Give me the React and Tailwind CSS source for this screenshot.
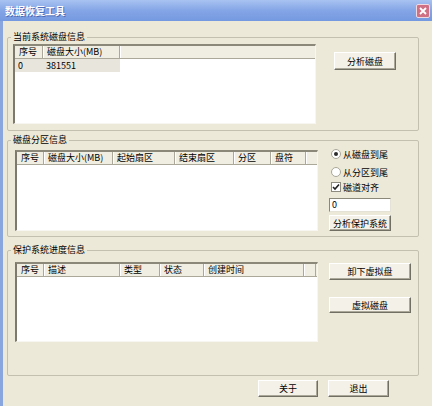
import React from "react";

const font = { fontFamily: '"Noto Sans CJK SC", "Liberation Sans", sans-serif' };

// XP-classic style push button
const Btn = ({ children, className }) => (
  <button
    className={`flex items-center justify-center bg-[#f3f1e8] border border-t-white border-l-white border-b-[#716f64] border-r-[#716f64] shadow-[inset_-1px_-1px_0_#aca899] text-[9px] leading-none text-black ${className}`}
  >
    {children}
  </button>
);

// etched group box with caption sitting on the top line
const Group = ({ label, className, children }) => (
  <div className={`ml-[4px] w-[412px] border border-[#c3c0b0] rounded-[2px] flex flex-col ${className}`}>
    <div className="-mt-[7px] ml-[3px] self-start px-[2px] h-[12px] bg-[#ece9d8] text-[9px] leading-[12px] text-black">
      {label}
    </div>
    {children}
  </div>
);

const ListView = ({ cols, rows = [], stub = true, className }) => (
  <div
    className={`bg-white border-t-2 border-l-2 border-t-[#8b887a] border-l-[#7d7a6d] border-b border-r border-b-[#f7f6f0] border-r-[#f7f6f0] flex flex-col overflow-hidden ${className}`}
  >
    <div className="flex h-[13px] shrink-0 bg-[#f0eee3] border-b border-b-[#aca899]">
      {cols.map((c) => (
        <div
          key={c.t}
          style={{ width: c.w }}
          className="shrink-0 h-full pl-[4px] border-r border-r-[#aca899] shadow-[1px_0_0_white] text-[9px] leading-[12px] text-black whitespace-nowrap overflow-hidden"
        >
          {c.t}
        </div>
      ))}
      {stub && <div className="w-[12px] shrink-0 h-full border-r border-r-[#aca899]" />}
      <div className="flex-1" />
    </div>
    {rows.map((r, i) => (
      <div key={i} className="flex h-[13px] self-start bg-[#e8e6dc]">
        {r.map((v, j) => (
          <div
            key={j}
            style={{ width: cols[j].w }}
            className="shrink-0 pl-[3px] text-[9px] leading-[13px] text-black"
          >
            {v}
          </div>
        ))}
      </div>
    ))}
  </div>
);

const Radio = ({ checked, label }) => (
  <div className="flex items-center h-[14px]">
    <div className="ml-[2px] w-[10px] h-[10px] rounded-full bg-white border border-[#a9a79a] flex items-center justify-center">
      {checked && <div className="w-[4px] h-[4px] rounded-full bg-[#2b2b2b]" />}
    </div>
    <span className="ml-[2px] text-[9px] leading-none text-black">{label}</span>
  </div>
);

const Check = ({ label }) => (
  <div className="flex items-center h-[14px]">
    <div className="ml-[2px] w-[10px] h-[10px] bg-white border border-[#8d8b80] flex items-center justify-center">
      <svg width="8" height="8" viewBox="0 0 8 8">
        <path d="M1 4 L3 6 L7 1.5" fill="none" stroke="#222" strokeWidth="1.6" />
      </svg>
    </div>
    <span className="ml-[2px] text-[9px] leading-none text-black">{label}</span>
  </div>
);

export default function App() {
  return (
    <div style={font} className="w-[432px] h-[406px] bg-[#ece9d8] flex flex-col overflow-hidden select-none">
      {/* title bar */}
      <div className="h-[21px] shrink-0 flex items-center justify-between bg-gradient-to-b from-[#a8c2f1] via-[#84a5e6] to-[#7599e0] pl-[5px] pr-[2px]">
        <span className="text-white font-bold text-[10px] leading-none [text-shadow:1px_1px_0_#4a6bb8]">
          数据恢复工具
        </span>
        <div className="w-[14px] h-[14px] rounded-[2px] bg-[#cf7084] border border-[#f0d8e0] flex items-center justify-center">
          <svg width="8" height="8" viewBox="0 0 8 8">
            <path d="M1 1 L7 7 M7 1 L1 7" stroke="white" strokeWidth="1.8" />
          </svg>
        </div>
      </div>

      <div className="flex flex-1">
        <div className="w-[3px] bg-[#8aa6df]" />
        <div className="flex-1 flex flex-col">
          {/* 当前系统磁盘信息 */}
          <Group label="当前系统磁盘信息" className="mt-[16px] h-[94px]">
            <div className="flex items-start pl-[5px] mt-[1px]">
              <ListView
                className="w-[303px] h-[80px]"
                stub={false}
                cols={[
                  { t: "序号", w: 28 },
                  { t: "磁盘大小(MB)", w: 77 },
                ]}
                rows={[["0", "381551"]]}
              />
              <Btn className="ml-[18px] mt-[8px] w-[62px] h-[18px]">分析磁盘</Btn>
            </div>
          </Group>

          {/* 磁盘分区信息 */}
          <Group label="磁盘分区信息" className="mt-[9px] h-[97px]">
            <div className="flex items-start pl-[7px]">
              <ListView
                className="mt-[4px] w-[303px] h-[81px]"
                cols={[
                  { t: "序号", w: 27 },
                  { t: "磁盘大小(MB)", w: 69 },
                  { t: "起始扇区", w: 62 },
                  { t: "结束扇区", w: 59 },
                  { t: "分区", w: 37 },
                  { t: "盘符", w: 35 },
                ]}
              />
              <div className="ml-[11px] mt-[1px] flex flex-col w-[62px]">
                <Radio checked label="从磁盘到尾" />
                <div className="mt-[4px]">
                  <Radio label="从分区到尾" />
                </div>
                <div className="mt-[1px]">
                  <Check label="磁道对齐" />
                </div>
                <div className="mt-[4px] h-[14px] bg-white border border-t-[#8b887a] border-l-[#8b887a] border-b-[#e4e2d6] border-r-[#e4e2d6] pl-[2px] text-[9px] leading-[12px] text-black">
                  0
                </div>
                <Btn className="mt-[3px] w-[62px] h-[16px]">分析保护系统</Btn>
              </div>
            </div>
          </Group>

          {/* 保护系统进度信息 */}
          <Group label="保护系统进度信息" className="mt-[13px] h-[126px]">
            <div className="flex items-start pl-[7px]">
              <ListView
                className="mt-[6px] w-[303px] h-[80px]"
                cols={[
                  { t: "序号", w: 27 },
                  { t: "描述", w: 76 },
                  { t: "类型", w: 40 },
                  { t: "状态", w: 44 },
                  { t: "创建时间", w: 100 },
                ]}
              />
              <div className="ml-[11px] mt-[7px] flex flex-col">
                <Btn className="w-[82px] h-[17px]">卸下虚拟盘</Btn>
                <Btn className="mt-[17px] w-[82px] h-[16px]">虚拟磁盘</Btn>
              </div>
            </div>
          </Group>

          {/* bottom buttons */}
          <div className="flex mt-[4px] ml-[255px] gap-[10px]">
            <Btn className="w-[60px] h-[17px]">关于</Btn>
            <Btn className="w-[61px] h-[17px]">退出</Btn>
          </div>
        </div>
      </div>
    </div>
  );
}
